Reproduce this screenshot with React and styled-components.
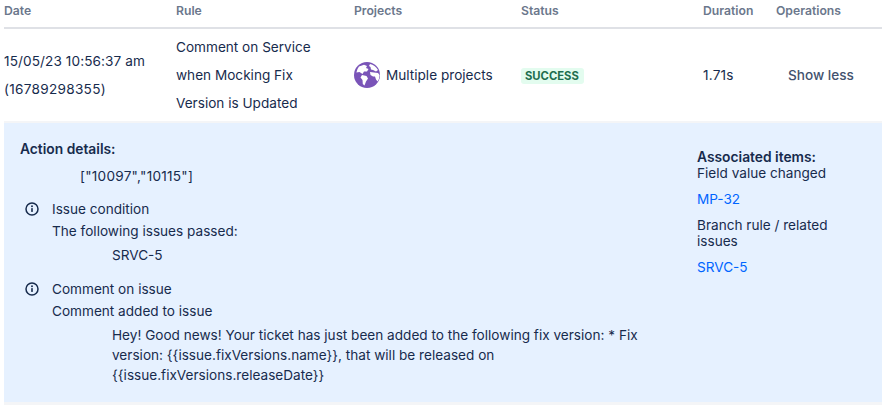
import React from 'react';
import styled, { createGlobalStyle } from 'styled-components';

const GlobalStyle = createGlobalStyle`
  html, body {
    margin: 0;
    padding: 0;
    background: #fff;
    font-family: Inter, "Noto Sans", sans-serif;
    color: #172b4d;
  }
`;

const Table = styled.div`
  width: 878px;
  margin-left: 4px;
`;

const Row = styled.div`
  display: grid;
  grid-template-columns: 172px 178px 167px 182px 73px 106px;
  align-items: center;
`;

const HeadRow = styled(Row)`
  box-sizing: border-box;
  border-bottom: 2px solid #dfe1e6;
  height: 29px;
  padding-bottom: 5px;
`;

const HeadCell = styled.div`
  font-size: 12.2px;
  font-weight: 600;
  line-height: 20px;
  color: #6b778c;
`;

const BodyRow = styled(Row)`
  height: 92px;
  border-bottom: 2px solid #f4f5f7;
  font-size: 13.6px;
  line-height: 28px;
`;

const DateLine = styled.div`
  letter-spacing: ${(p) => p.$spacing}px;
`;

const ProjectCell = styled.div`
  display: flex;
  align-items: center;
  gap: 6px;
`;

const Lozenge = styled.span`
  display: inline-block;
  padding: 0 5px 0 4px;
  border-radius: 3px;
  background: #e3fcef;
  color: #216e4e;
  font-size: 11.25px;
  font-weight: 700;
  line-height: 16px;
`;

const ShowLess = styled.div`
  padding-left: 12px;
  color: #42526e;
  font-weight: 500;
`;

const Panel = styled.div`
  display: flex;
  justify-content: space-between;
  padding: 16px 16px 0;
  box-sizing: border-box;
  background: #e6f1ff;
  border-bottom: 3px solid #f4f5f7;
  height: 282px;
  font-size: 13.6px;
  line-height: 20px;
`;

const Details = styled.div`
  width: 640px;
`;

const Heading = styled.div`
  font-size: 13.8px;
  font-weight: 600;
`;

const Payload = styled.div`
  margin: 7px 0 0 60px;
  letter-spacing: 0.25px;
`;

const Entry = styled.div`
  display: grid;
  grid-template-columns: 32px 1fr;
  margin-top: ${(p) => p.$top}px;
`;

const EntryIcon = styled.div`
  display: flex;
  align-items: center;
  justify-content: center;
  height: 22px;
  width: 24px;
`;

const EntryBody = styled.div`
  line-height: 22px;
`;

const Nested = styled.div`
  margin: 3px 0 0 92px;
  line-height: 20px;
  width: 530px;
`;

const Side = styled.div`
  width: 169px;
  padding-top: 10px;
  line-height: 16px;
`;

const SideText = styled.div`
  margin-top: ${(p) => p.$top || 0}px;
`;

const IssueLink = styled.div`
  margin-top: 10px;
  color: #0065ff;
`;

const InfoIcon = () => (
  <svg width="16" height="16" viewBox="0 0 16 16" fill="none">
    <circle cx="8" cy="8" r="6" stroke="#172b4d" strokeWidth="1.5" />
    <rect x="7.2" y="7" width="1.6" height="4" rx="0.4" fill="#172b4d" />
    <circle cx="8" cy="5.2" r="0.95" fill="#172b4d" />
  </svg>
);

const Globe = () => (
  <svg width="26" height="26" viewBox="1 1 26 26">
    <circle cx="14" cy="14" r="13" fill="#7a54b8" />
    <path
      d="M6 5.5 L11 3.8 L14 5 L13 7 L15.5 8 L14 10.5 L11 10.5 L9.5 13 L6.5 11 L3.4 11.5 Q4 8 6 5.5 Z"
      fill="#fff"
    />
    <path
      d="M17 3 Q22 4 25 9 L23 10.5 L20 9 L18 8.5 L17.5 6 L16 5 Z"
      fill="#fff"
    />
    <path
      d="M9 14 L13.5 15 L15 17.5 L13 20.5 L11.5 24.5 L9.8 23 L9.5 19 L7.5 16.5 Z"
      fill="#fff"
    />
    <path
      d="M17 11 L21 11.5 L25 12 L26.6 14 Q26.4 18 24.6 20.5 L23 18.5 L22 15.5 L20 15.5 L17.5 14 Z"
      fill="#fff"
    />
  </svg>
);

const App = () => (
  <>
    <GlobalStyle />
    <Table>
      <HeadRow>
        <HeadCell>Date</HeadCell>
        <HeadCell>Rule</HeadCell>
        <HeadCell>Projects</HeadCell>
        <HeadCell>Status</HeadCell>
        <HeadCell>Duration</HeadCell>
        <HeadCell>Operations</HeadCell>
      </HeadRow>
      <BodyRow>
        <div>
          <DateLine $spacing={0.1}>15/05/23 10:56:37 am</DateLine>
          <DateLine $spacing={0.28}>(16789298355)</DateLine>
        </div>
        <div>
          Comment on Service
          <br />
          when Mocking Fix
          <br />
          Version is Updated
        </div>
        <ProjectCell>
          <Globe />
          Multiple projects
        </ProjectCell>
        <div>
          <Lozenge>SUCCESS</Lozenge>
        </div>
        <DateLine $spacing={0.2}>1.71s</DateLine>
        <ShowLess>Show less</ShowLess>
      </BodyRow>
      <Panel>
        <Details>
          <Heading>Action details:</Heading>
          <Payload>["10097","10115"]</Payload>
          <Entry $top={12}>
            <EntryIcon>
              <InfoIcon />
            </EntryIcon>
            <EntryBody>
              Issue condition
              <br />
              The following issues passed:
            </EntryBody>
          </Entry>
          <Nested>SRVC-5</Nested>
          <Entry $top={13}>
            <EntryIcon>
              <InfoIcon />
            </EntryIcon>
            <EntryBody>
              Comment on issue
              <br />
              Comment added to issue
            </EntryBody>
          </Entry>
          <Nested>
            Hey! Good news! Your ticket has just been added to the following fix version: * Fix
            version: {'{{issue.fixVersions.name}}'}, that will be released on{' '}
            {'{{issue.fixVersions.releaseDate}}'}
          </Nested>
        </Details>
        <Side>
          <Heading>Associated items:</Heading>
          <SideText>Field value changed</SideText>
          <IssueLink>MP-32</IssueLink>
          <SideText $top={10}>Branch rule / related issues</SideText>
          <IssueLink>SRVC-5</IssueLink>
        </Side>
      </Panel>
    </Table>
  </>
);

export default App;
